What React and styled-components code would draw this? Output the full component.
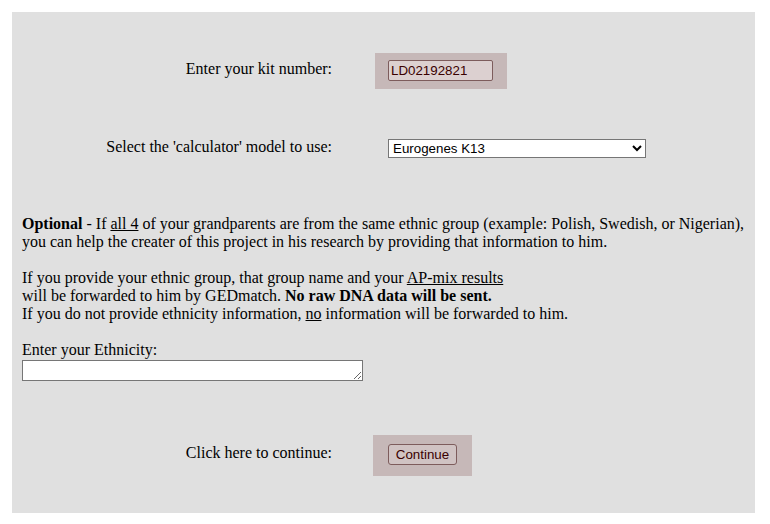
import React from "react";
import styled, { createGlobalStyle } from "styled-components";

const GlobalStyle = createGlobalStyle`
  body {
    margin: 0;
    background: #ffffff;
    color: #000000;
    font-family: "Liberation Serif", "Times New Roman", serif;
    font-size: 16px;
    line-height: 18px;
  }
`;

const Panel = styled.form`
  margin: 12px 15px 11px 12px;
  padding: 41px 10px 37px;
  background: #e0e0e0;
`;

const Row = styled.div`
  display: grid;
  grid-template-columns: 310px 1fr;
  align-items: center;
  column-gap: ${(p) => p.$gap};
  margin-bottom: ${(p) => p.$after || "0"};
`;

const Label = styled.label`
  text-align: right;
  padding-bottom: ${(p) => p.$lift || "2px"};
`;

const Highlight = styled.div`
  justify-self: start;
  padding: ${(p) => p.$pad};
  background: #c6b8b8;
`;

const TextInput = styled.input`
  display: block;
  box-sizing: border-box;
  width: 105px;
  height: 21px;
  padding: 1px 2px;
  border: 1px solid #7d5c5c;
  border-radius: 2px;
  background: #dcd0d0;
  color: #3a0000;
  font-family: "Liberation Sans", Arial, sans-serif;
`;

const ModelSelect = styled.select`
  box-sizing: border-box;
  width: 258px;
  height: 19px;
  border: 1px solid #767676;
  background: #ffffff;
  color: #000000;
  font-family: "Liberation Sans", Arial, sans-serif;
`;

const Notes = styled.section`
  margin-bottom: 54px;
`;

const Paragraph = styled.p`
  margin: 0 0 18px;
`;

const FieldLabel = styled.label`
  display: block;
`;

const Ethnicity = styled.textarea`
  display: block;
  box-sizing: border-box;
  width: 341px;
  height: 21px;
  margin-top: 1px;
  padding: 2px;
  border: 1px solid #767676;
  background: #ffffff;
  font-family: "Liberation Mono", monospace;
`;

const ContinueButton = styled.button`
  display: block;
  box-sizing: border-box;
  width: 69px;
  height: 21px;
  padding: 0;
  border: 1px solid #7d5c5c;
  border-radius: 3px;
  background: #d0c3c3;
  color: #3a0000;
  font-family: "Liberation Sans", Arial, sans-serif;
`;

export default function App() {
  return (
    <>
      <GlobalStyle />
      <Panel onSubmit={(e) => e.preventDefault()}>
        <Row $gap="43px" $after="49px">
          <Label htmlFor="kit" $lift="4px">Enter your kit number:</Label>
          <Highlight $pad="7px 14px 8px 13px">
            <TextInput id="kit" defaultValue="LD02192821" />
          </Highlight>
        </Row>
        <Row $gap="56px" $after="57px">
          <Label htmlFor="model">Select the 'calculator' model to use:</Label>
          <ModelSelect id="model">
            <option>Eurogenes K13</option>
          </ModelSelect>
        </Row>
        <Notes>
          <Paragraph>
            <b>Optional</b> - If <u>all 4</u> of your grandparents are from the same ethnic group
            (example: Polish, Swedish, or Nigerian),
            <br />
            you can help the creater of this project in his research by providing that information to
            him.
          </Paragraph>
          <Paragraph>
            If you provide your ethnic group, that group name and your <u>AP-mix results</u>
            <br />
            will be forwarded to him by GEDmatch. <b>No raw DNA data will be sent.</b>
            <br />
            If you do not provide ethnicity information, <u>no</u> information will be forwarded to
            him.
          </Paragraph>
          <FieldLabel htmlFor="ethnicity">Enter your Ethnicity:</FieldLabel>
          <Ethnicity id="ethnicity" />
        </Notes>
        <Row $gap="41px">
          <Label htmlFor="continue" $lift="6px">Click here to continue:</Label>
          <Highlight $pad="9px 15px 11px">
            <ContinueButton id="continue" type="submit">
              Continue
            </ContinueButton>
          </Highlight>
        </Row>
      </Panel>
    </>
  );
}
